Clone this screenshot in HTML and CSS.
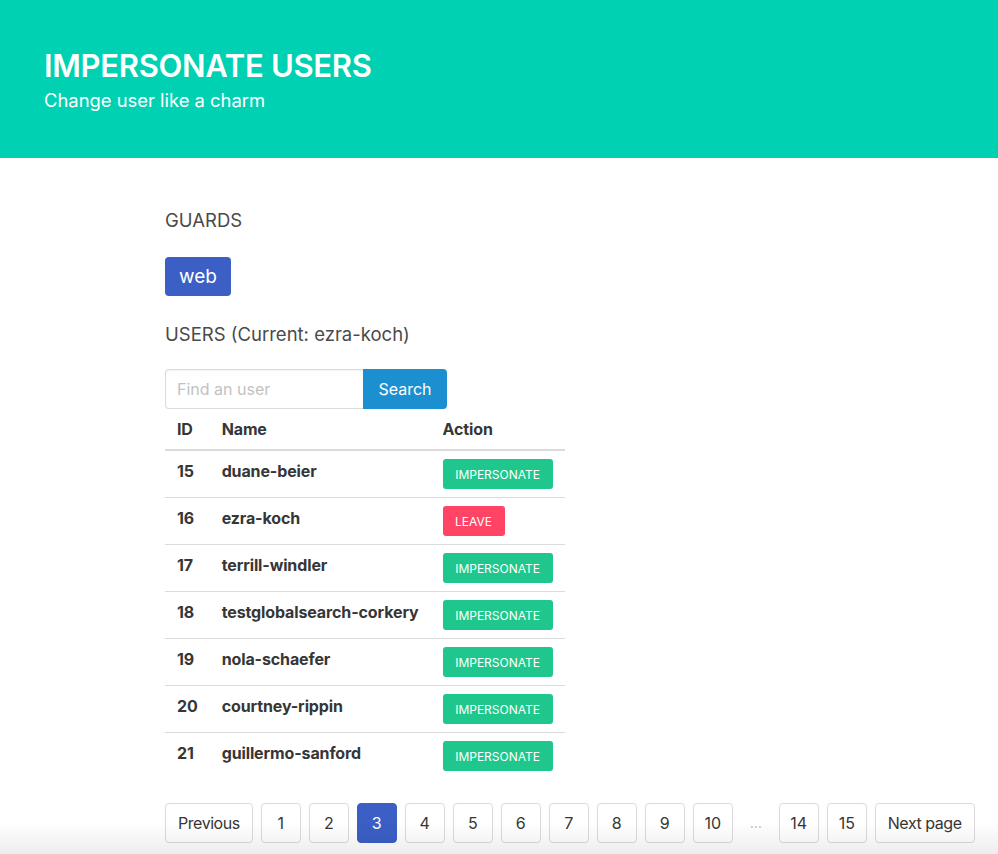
FILE: index.html
```html
<!DOCTYPE html>
<html lang="en">
<head>
<meta charset="utf-8">
<title>Impersonate users</title>
<link rel="stylesheet" href="styles.css">
</head>
<body>
<header class="hero">
  <h1 class="hero-title">IMPERSONATE USERS</h1>
  <p class="hero-subtitle">Change user like a charm</p>
</header>
<main class="content">
  <h2 class="section-title">GUARDS</h2>
  <div class="guards">
    <button class="btn btn-guard">web</button>
  </div>
  <h2 class="section-title">USERS (Current: ezra-koch)</h2>
  <form class="search">
    <input class="search-input" type="text" placeholder="Find an user">
    <button class="btn btn-search" type="button">Search</button>
  </form>
  <table class="users">
    <thead>
      <tr><th>ID</th><th>Name</th><th>Action</th></tr>
    </thead>
    <tbody>
      <tr><td>15</td><td>duane-beier</td><td><button class="btn-small btn-impersonate">IMPERSONATE</button></td></tr>
      <tr><td>16</td><td>ezra-koch</td><td><button class="btn-small btn-leave">LEAVE</button></td></tr>
      <tr><td>17</td><td>terrill-windler</td><td><button class="btn-small btn-impersonate">IMPERSONATE</button></td></tr>
      <tr><td>18</td><td>testglobalsearch-corkery</td><td><button class="btn-small btn-impersonate">IMPERSONATE</button></td></tr>
      <tr><td>19</td><td>nola-schaefer</td><td><button class="btn-small btn-impersonate">IMPERSONATE</button></td></tr>
      <tr><td>20</td><td>courtney-rippin</td><td><button class="btn-small btn-impersonate">IMPERSONATE</button></td></tr>
      <tr><td>21</td><td>guillermo-sanford</td><td><button class="btn-small btn-impersonate">IMPERSONATE</button></td></tr>
    </tbody>
  </table>
  <nav class="pagination">
    <a class="page-link page-wide">Previous</a>
    <a class="page-link">1</a>
    <a class="page-link">2</a>
    <a class="page-link is-current">3</a>
    <a class="page-link">4</a>
    <a class="page-link">5</a>
    <a class="page-link">6</a>
    <a class="page-link">7</a>
    <a class="page-link">8</a>
    <a class="page-link">9</a>
    <a class="page-link">10</a>
    <span class="page-ellipsis">&hellip;</span>
    <a class="page-link">14</a>
    <a class="page-link">15</a>
    <a class="page-link page-wide">Next page</a>
  </nav>
</main>
<div class="bottom-fade"></div>
</body>
</html>
```

FILE: styles.css
```css
* { box-sizing: border-box; }
html, body { margin: 0; padding: 0; background: #fff; }
body {
  font-family: Inter, "Helvetica Neue", Arial, sans-serif;
  color: #4a4a4a;
  font-size: 16px;
  line-height: 24px;
}
.hero {
  background: #00d1b2;
  height: 158px;
  padding: 47px 44px 0;
  color: #fff;
}
.hero-title {
  margin: 0;
  font-size: 31px;
  font-weight: 600;
  line-height: 38px;
  letter-spacing: -0.3px;
}
.hero-subtitle {
  margin: 0;
  font-size: 18.4px;
  line-height: 30px;
}
.content {
  padding: 50px 0 0 165px;
}
.section-title {
  margin: 0;
  font-size: 18.5px;
  font-weight: 400;
  line-height: 24px;
  color: #4a4a4a;
}
.guards { margin: 25px 0 26px; }
.btn {
  font-family: inherit;
  border: 1px solid transparent;
  border-radius: 4px;
  color: #fff;
  cursor: pointer;
}
.btn-guard {
  background: #3b5fc5;
  font-size: 19px;
  height: 39px;
  width: 66px;
  padding: 0;
}
.search {
  display: flex;
  margin: 23px 0 0;
}
.search-input {
  width: 198px;
  height: 40px;
  border: 1px solid #dbdbdb;
  border-right: none;
  border-radius: 4px 0 0 4px;
  padding: 0 11px;
  font-family: inherit;
  font-size: 16px;
  color: #363636;
  box-shadow: inset 0 1px 2px rgba(10,10,10,0.05);
}
.search-input::placeholder { color: #c2c2c2; }
.btn-search {
  background: #1b8fcf;
  height: 40px;
  width: 84px;
  font-size: 16px;
  border-radius: 0 4px 4px 0;
  padding: 0;
}
.users {
  border-collapse: collapse;
  margin-top: 0;
  color: #363636;
  letter-spacing: -0.12px;
}
.users th, .users td {
  padding: 8px 12px;
  text-align: left;
  vertical-align: top;
  font-weight: 700;
  border-bottom: 1px solid #dbdbdb;
  line-height: 24px;
}
.users th { border-bottom-width: 2px; padding-top: 8px; padding-bottom: 8px; }
.users td { padding-top: 8px; padding-bottom: 7px; }
.users td:last-child { padding-top: 8px; padding-bottom: 8px; }
.users tbody tr:last-child td { border-bottom: none; }
.btn-small {
  height: 30px;
  border: none;
  border-radius: 3px;
  color: #fff;
  font-family: inherit;
  font-size: 12px;
  font-weight: 400;
  letter-spacing: 0;
  padding: 0;
  cursor: pointer;
  display: block;
}
.btn-impersonate { background: #1fc78d; width: 110px; }
.btn-leave { background: #ff4466; width: 62px; }
.pagination {
  display: flex;
  align-items: center;
  gap: 8px;
  margin-top: 24px;
}
.page-link {
  display: flex;
  align-items: center;
  justify-content: center;
  min-width: 40px;
  height: 40px;
  border: 1px solid #dbdbdb;
  border-radius: 4px;
  color: #363636;
  font-size: 16px;
  padding: 0 8px;
  text-decoration: none;
}
.page-wide { padding: 0 12px; letter-spacing: -0.45px; }
.page-link.is-current {
  background: #3b5fc5;
  border-color: #3b5fc5;
  color: #fff;
}
.page-ellipsis {
  width: 30px;
  text-align: center;
  color: #b5b5b5;
  font-size: 14px;
}
.bottom-fade {
  position: fixed;
  left: 0; right: 0; bottom: 0;
  height: 32px;
  background: linear-gradient(rgba(0,0,0,0), rgba(0,0,0,0.07));
  pointer-events: none;
}
```
